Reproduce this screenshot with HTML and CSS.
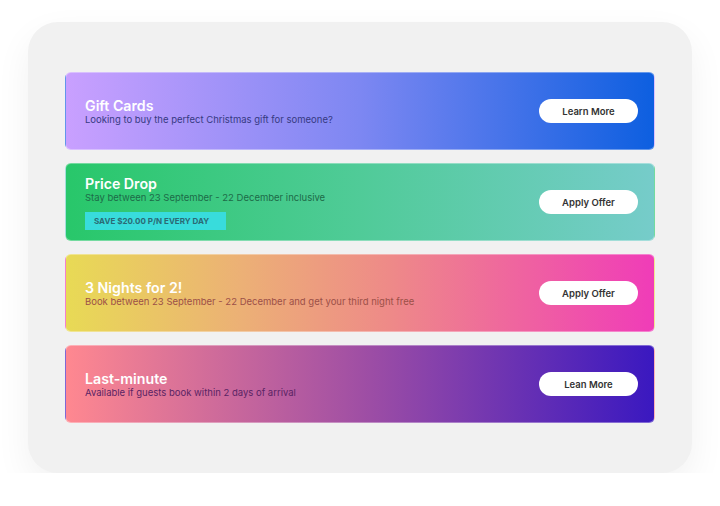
FILE: index.html
```html
<!DOCTYPE html>
<html lang="en">
<head>
  <meta charset="UTF-8" />
  <meta name="viewport" content="width=device-width, initial-scale=1" />
  <title>Offers</title>
  <link rel="stylesheet" href="styles.css">
</head>
<body>
  <div class="panel">
    <div class="offer offer-gift">
      <div class="offer-text">
        <h2>Gift Cards</h2>
        <p>Looking to buy the perfect Christmas gift for someone?</p>
      </div>
      <button class="offer-button">Learn More</button>
    </div>

    <div class="offer offer-price">
      <div class="offer-text">
        <h2>Price Drop</h2>
        <p>Stay between 23 September - 22 December inclusive</p>
        <span class="badge">SAVE $20.00 P/N EVERY DAY</span>
      </div>
      <button class="offer-button">Apply Offer</button>
    </div>

    <div class="offer offer-nights">
      <div class="offer-text">
        <h2>3 Nights for 2!</h2>
        <p>Book between 23 September - 22 December and get your third night free</p>
      </div>
      <button class="offer-button">Apply Offer</button>
    </div>

    <div class="offer offer-last">
      <div class="offer-text">
        <h2>Last-minute</h2>
        <p>Available if guests book within 2 days of arrival</p>
      </div>
      <button class="offer-button">Lean More</button>
    </div>
  </div>
</body>
</html>
```

FILE: styles.css
```css
body {
  margin: 0;
  background: #ffffff;
  font-family: 'Inter', 'Noto Sans', sans-serif;
}

.panel {
  margin: 22px 0 0 28px;
  width: 590px;
  padding: 50px 37px;
  background: #f1f1f1;
  border-radius: 30px;
  box-shadow: 0 14px 36px rgba(0, 0, 0, 0.06);
  display: flex;
  flex-direction: column;
  gap: 13px;
}

.offer {
  height: 78px;
  box-sizing: border-box;
  border: 1px solid rgba(255, 255, 255, 0.35);
  border-radius: 6px;
  padding: 0 16px 0 19px;
  display: flex;
  align-items: center;
  justify-content: space-between;
}

.offer-text h2 {
  margin: 0;
  font-size: 14.2px;
  font-weight: 600;
  line-height: 17px;
  color: #ffffff;
}

.offer-text p {
  margin: 0;
  font-size: 9.5px;
  line-height: 12px;
}

.badge {
  display: inline-block;
  margin-top: 8px;
  padding: 0 17px 0 9px;
  height: 18px;
  line-height: 18px;
  background: #38dcdc;
  color: #2b6a74;
  font-size: 8px;
  font-weight: 700;
}

.offer-button {
  width: 99px;
  height: 24px;
  border: none;
  border-radius: 12px;
  background: #ffffff;
  color: #333333;
  font-family: inherit;
  font-size: 9.5px;
  font-weight: 600;
  cursor: pointer;
}

.offer-gift {
  background: linear-gradient(90deg, #c9a0ff, #7d87f2 50%, #0d5fe0);
}

.offer-gift p {
  color: #363a82;
}

.offer-price {
  background: linear-gradient(90deg, #28c76a, #50cb98 50%, #76ccca);
}

.offer-price p {
  color: #1d6b48;
}

.offer-nights {
  background: linear-gradient(90deg, #e8da55, #ecb076 30%, #ee8a88 55%, #f03cb8);
}

.offer-nights p {
  color: #9c5048;
}

.offer-last {
  background: linear-gradient(90deg, #ff8890, #a04fa4 50%, #3a18c0);
}

.offer-last p {
  color: #5a2464;
}
```
